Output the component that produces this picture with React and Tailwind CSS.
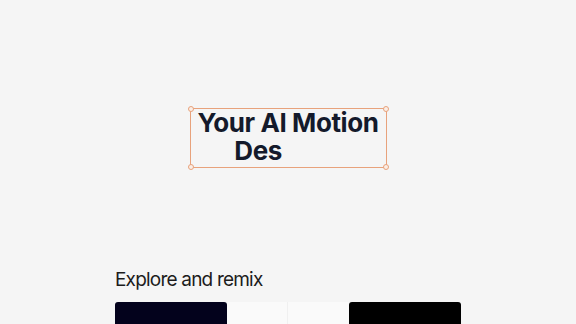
import React from "react";

const font = { fontFamily: "Inter, 'Noto Sans', sans-serif" };

function Handle({ pos }) {
  return (
    <span
      className={`absolute h-[6px] w-[6px] rounded-full border border-[#e8a27c] bg-[#fbeee6] ${pos}`}
    />
  );
}

export default function App() {
  return (
    <div className="min-h-screen w-full overflow-hidden bg-[#f5f5f5]" style={font}>
      <div className="flex justify-center pt-[108px]">
        <div className="relative flex h-[60px] w-[197px] flex-col items-center border border-[#e8a27c]">
          <Handle pos="-left-[3px] -top-[3px]" />
          <Handle pos="-right-[3px] -top-[3px]" />
          <Handle pos="-left-[3px] -bottom-[3px]" />
          <Handle pos="-right-[3px] -bottom-[3px]" />
          <h1 className="text-center text-[26px] font-bold leading-[28px] tracking-[-0.4px] text-[#141a2b]">
            <span className="block">Your AI Motion</span>
            <span className="block pl-[4px]">
              Des<span className="invisible">igner</span>
            </span>
          </h1>
        </div>
      </div>

      <div className="mx-auto mt-[98px] w-[346px]">
        <h2 className="text-[19px] font-normal leading-[28px] tracking-[-0.8px] text-[#1c1c1c]">Explore and remix</h2>
        <div className="mt-[8px] flex">
          <div className="h-[120px] w-[112px] rounded-[3px] bg-[#03021c]" />
          <div className="flex h-[120px] w-[122px]">
            <div className="h-full w-[60px] bg-[#fafafa]" />
            <div className="h-full w-[1px] bg-[#f0f0f0]" />
            <div className="h-full flex-1 bg-[#fafafa]" />
          </div>
          <div className="h-[120px] w-[112px] rounded-[3px] bg-black" />
        </div>
      </div>
    </div>
  );
}
